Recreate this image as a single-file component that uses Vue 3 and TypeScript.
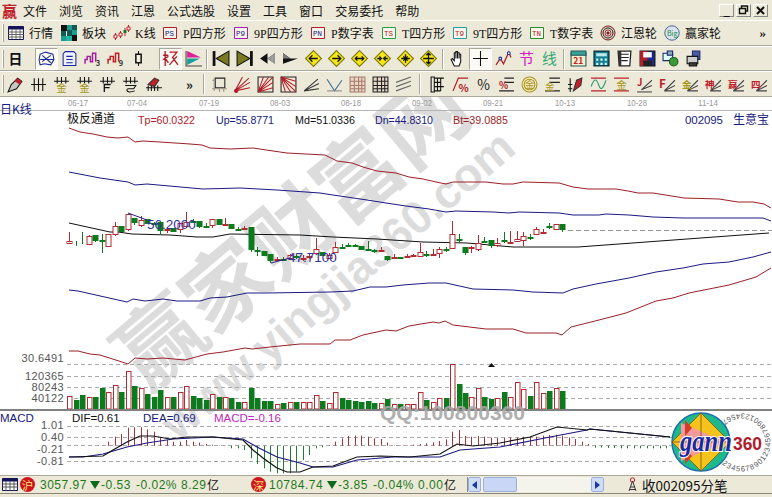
<template>
  <div class="app">
    <div class="menu">
      <span class="menu-logo">赢</span>
      <span v-for="m in menus" :key="m" class="menu-item">{{ m }}</span>
      <div class="win-btns">
        <span class="win-btn">_</span>
        <span class="win-btn">
          <svg width="11" height="10" viewBox="0 0 11 10">
            <path d="M3.5 3V1h6v5H7.5M1.5 3.5h6v5h-6z" fill="none" stroke="#111" stroke-width="1.4" />
          </svg>
        </span>
        <span class="win-btn">
          <svg width="9" height="9" viewBox="0 0 9 9">
            <path d="M1 1l7 7M8 1 1 8" fill="none" stroke="#111" stroke-width="2" />
          </svg>
        </span>
      </div>
    </div>

    <div class="bar bar-one">
      <i class="grip"></i>
      <div v-for="item in mainTools" :key="item.label" class="main-tool" :style="{ width: item.span + 'px' }">
        <svg class="ico" :width="item.w" height="16" :viewBox="`0 0 ${item.w} 16`">
          <component :is="el.tag" v-for="(el, n) in item.els" :key="n" v-bind="el.attrs">{{ el.text }}</component>
        </svg>
        <span>{{ item.label }}</span>
      </div>
      <span class="more">»</span>
    </div>

    <div class="bar bar-two">
      <i class="grip"></i>
      <template v-for="(tool, idx) in rowTwo" :key="idx">
        <i v-if="tool.sep" class="sep" :style="{ width: tool.sep + 'px' }"></i>
        <span v-else-if="tool.arrow" class="drop" :style="{ width: tool.arrow + 'px' }"></span>
        <div v-else class="tool" :class="{ pressed: tool.pressed }">
          <svg class="ico" width="17" height="17" viewBox="0 0 16 16">
            <component :is="el.tag" v-for="(el, n) in tool.els" :key="n" v-bind="el.attrs">{{ el.text }}</component>
          </svg>
        </div>
      </template>
    </div>

    <div class="bar bar-three">
      <i class="grip"></i>
      <template v-for="(tool, idx) in rowThree" :key="idx">
        <i v-if="tool.sep" class="sep" :style="{ width: tool.sep + 'px' }"></i>
        <span v-else-if="tool.more" class="more more-inline">»</span>
        <div v-else class="tool">
          <svg class="ico" width="17" height="17" viewBox="0 0 16 16">
            <component :is="el.tag" v-for="(el, n) in tool.els" :key="n" v-bind="el.attrs">{{ el.text }}</component>
          </svg>
        </div>
      </template>
    </div>

    <div class="chart">
      <svg class="chart-svg" width="772" height="378" viewBox="0 97 772 378">
        <!-- watermark under the chart -->
        <g class="mark">
          <text class="mark-big" transform="translate(147 393) rotate(-40)" textLength="430" lengthAdjust="spacing">赢家财富网</text>
          <text class="mark-url" transform="translate(178 442) rotate(-40.5)" textLength="447" lengthAdjust="spacing">www.yingjia360.com</text>
        </g>

        <!-- time axis -->
        <line x1="0" y1="110.5" x2="772" y2="110.5" stroke="#b5b5b5" />
        <text v-for="d in dates" :key="d.t" :x="d.x" y="106" class="axis" textLength="20" lengthAdjust="spacingAndGlyphs">{{ d.t }}</text>
        <text x="0" y="114" class="cn" fill="#16207e" font-size="12">日K线</text>

        <!-- legend -->
        <text x="67" y="123" class="cn" fill="#111" font-size="12">极反通道</text>
        <text v-for="l in legend" :key="l.t" :x="l.x" y="124" class="num" :fill="l.c" font-size="11" :textLength="l.w" lengthAdjust="spacingAndGlyphs">{{ l.t }}</text>
        <text x="685" y="124" class="num" fill="#16207e" font-size="11.5" textLength="38">002095</text>
        <text x="733" y="124" class="cn" fill="#16207e" font-size="12">生意宝</text>

        <!-- channel lines -->
        <polyline :points="tpLine" fill="none" stroke="#9c1f26" />
        <polyline :points="upLine" fill="none" stroke="#1a1a82" />
        <polyline :points="mdLine" fill="none" stroke="#111" />
        <polyline :points="dnLine" fill="none" stroke="#1a1a82" />
        <polyline :points="btLine" fill="none" stroke="#9c1f26" />

        <!-- price candles -->
        <g v-for="c in candles" :key="'c' + c.i" :stroke="c.color">
          <line :x1="c.x" :y1="c.high" :x2="c.x" :y2="c.low" />
          <rect
            :x="c.x - 2.5"
            :y="c.top"
            width="5"
            :height="c.h"
            :fill="c.up ? '#fff' : c.color"
            :stroke="c.color"
          />
        </g>
        <line x1="568" y1="230.5" x2="772" y2="230.5" stroke="#999" stroke-dasharray="5 3" />
        <polyline points="128,213 147,220" fill="none" stroke="#20208c" />
        <polyline points="271,263 290,258" fill="none" stroke="#20208c" />
        <text x="147" y="229" class="num" fill="#33339a" font-size="13.5">56.2000</text>
        <text x="288" y="262" class="num" fill="#33339a" font-size="13.5">47.7100</text>

        <!-- scale labels and dashes -->
        <line v-for="y in dashes" :key="y" x1="67" :y1="y" x2="772" :y2="y" stroke="#aaa" stroke-dasharray="4 3" />
        <text v-for="s in scales" :key="s.t" x="64" :y="s.y" class="scale">{{ s.t }}</text>

        <!-- volume -->
        <rect
          v-for="c in candles"
          :key="'v' + c.i"
          :x="c.x - 2"
          :y="c.vol"
          width="4.5"
          :height="409 - c.vol"
          :fill="c.up ? '#fff' : c.color"
          :stroke="c.color"
        />
        <path d="M488 367h7l-3.5-4z" fill="#111" />
        <rect x="0" y="409" width="772" height="2" fill="#808080" />

        <!-- macd -->
        <text x="0" y="422" class="num" fill="#16207e" font-size="11.5">MACD</text>
        <text x="72" y="422" class="num" fill="#111" font-size="11.5">DIF=0.61</text>
        <text x="143" y="422" class="num" fill="#16207e" font-size="11.5">DEA=0.69</text>
        <text x="214" y="422" class="num" fill="#c026c0" font-size="11.5">MACD=-0.16</text>
        <line
          v-for="b in macdBars"
          :key="'m' + b.i"
          :x1="b.x"
          y1="445.7"
          :x2="b.x"
          :y2="b.y"
          :stroke="b.y < 445.7 ? '#b0303a' : '#1f7f2c'"
        />
        <polyline :points="deaLine" fill="none" stroke="#1a1a82" stroke-width="1.2" />
        <polyline :points="difLine" fill="none" stroke="#111" stroke-width="1.2" />

        <text class="qq" x="380" y="420" textLength="145" lengthAdjust="spacingAndGlyphs">QQ:100800360</text>

        <!-- gann360 logo -->
        <g class="logo">
          <rect x="672" y="412" width="100" height="62" fill="#fff" />
          <path id="logoArc" d="M722 464A29 29 0 1 0 722 421" fill="none" />
          <text class="logo-ring"><textPath href="#logoArc">2345678901234567890123456789</textPath></text>
          <circle cx="701" cy="442" r="29" fill="#1db98a" stroke="#1d6db0" stroke-width="1.5" />
          <path d="M701 413 730 442 701 471 672 442z" fill="#f6c21c" stroke="#8a6a10" />
          <path d="M681 423 726 442 681 461z" fill="#f49a9a" />
          <path d="M685 420 692 428 685 436zM685 448 692 456 685 464z" fill="#d63a2a" />
          <path d="M701 413V471M672 442H730" stroke="#5a4a10" stroke-width=".7" fill="none" />
          <text class="logo-gann" x="680" y="451" textLength="52" lengthAdjust="spacingAndGlyphs">gann</text>
          <text class="logo-360" x="733" y="450" textLength="29" lengthAdjust="spacingAndGlyphs">360</text>
        </g>
      </svg>
    </div>

    <div class="status">
      <div class="quotes">
        <svg class="ico" width="16" height="13" viewBox="0 0 16 13">
          <path d="M.5.5h15v12H.5z" fill="#fff" stroke="#14145a" />
          <path d="M.5.5h15v3H.5z" fill="#14145a" />
          <path d="M.5 6h15M.5 9h15M4 3v10M8 3v10M12 3v10" stroke="#555" fill="none" />
        </svg>
        <div v-for="q in quotes" :key="q.name" class="quote" :class="q.cls">
          <span class="badge">{{ q.name }}</span>
          <span class="q-val">{{ q.value }}</span>
          <span class="q-tri"></span>
          <span class="q-chg">{{ q.change }}</span>
          <span class="q-pct">{{ q.pct }}</span>
          <span class="q-amt">{{ q.amount }}</span>
          <span class="q-yi">亿</span>
        </div>
      </div>
      <div class="scroll">
        <span class="scroll-btn">
          <svg width="6" height="8" viewBox="0 0 6 8"><path d="M5 0v8L0 4z" fill="#1a3a9a" /></svg>
        </span>
        <span class="scroll-thumb"></span>
        <span class="scroll-btn scroll-end">
          <svg width="6" height="8" viewBox="0 0 6 8"><path d="M0 0v8l5-4z" fill="#1a3a9a" /></svg>
        </span>
      </div>
      <div class="ticks">
        <svg width="11" height="15" viewBox="0 0 11 15">
          <path d="M5.5 4 2 14M5.5 4 9 14M3.5 10h4M3 12.5h5" stroke="#333" fill="none" />
          <circle cx="5.5" cy="3" r="2.2" fill="none" stroke="#c0202a" />
        </svg>
        <span>收002095分笔</span>
      </div>
    </div>
    <div class="footer"></div>
  </div>
</template>

<script setup lang="ts">
import { computed } from 'vue'

interface El {
  tag: string
  attrs: Record<string, string | number>
  text?: string
}

interface Tool {
  els?: El[]
  sep?: number
  arrow?: number
  pressed?: boolean
  more?: boolean
}

const p = (d: string, stroke = 'none', fill = 'none', sw = 1): El => ({
  tag: 'path',
  attrs: { d, stroke, fill, 'stroke-width': sw },
})
const t = (x: number, y: number, text: string, fill: string, size = 8, weight = 400): El => ({
  tag: 'text',
  attrs: { x, y, fill, 'font-size': size, 'font-weight': weight, 'font-family': '"Noto Sans CJK SC", sans-serif' },
  text,
})
const c = (cx: number, cy: number, r: number, stroke: string, fill = 'none'): El => ({
  tag: 'circle',
  attrs: { cx, cy, r, stroke, fill },
})

const box = (color: string, label: string, ink: string): El[] => [
  p('M1.5 2.5h13v11h-13z', color, '#f8f4ec'),
  { tag: 'text', attrs: { x: 3, y: 11, fill: ink, 'font-size': 7.5, 'font-family': '"Liberation Mono", monospace' }, text: label },
]

const menus = ['文件', '浏览', '资讯', '江恩', '公式选股', '设置', '工具', '窗口', '交易委托', '帮助']

const mainTools: { label: string; w: number; span: number; els: El[] }[] = [
  {
    label: '行情',
    w: 16,
    span: 53,
    els: [
      p('M.5 1.5h15v13H.5z', '#14145a', '#fff'),
      p('M.5 1.5h15v3H.5z', 'none', '#14145a'),
      p('M.5 7h15M.5 9.5h15M.5 12h15M4 4v10M8 4v10M12 4v10', '#666'),
    ],
  },
  {
    label: '板块',
    w: 16,
    span: 52,
    els: [
      p('M0 0h6v6H0z', 'none', '#111'),
      p('M6 0h5v5H6zM11 5h5v5h-5zM0 11h5v5H0z', 'none', '#1a9c8e'),
      p('M11 0h5v5h-5zM6 5h5v6H6zM0 6h5v5H0z', 'none', '#135a55'),
      p('M5 11h6v5H5z', 'none', '#26b5a5'),
      p('M11 10h5v6h-5z', 'none', '#111'),
    ],
  },
  {
    label: 'K线',
    w: 17,
    span: 49,
    els: [
      p('M2.5 8v7M7.5 6v7M12 3v8M15.5 0v7', '#c0202a'),
      p('M1 10h3v3H1zM6 8h3v3H6zM14 2h3v3h-3z', '#c0202a', '#fff'),
      p('M10.5 5h3v3h-3z', 'none', '#157a20'),
    ],
  },
  { label: 'P四方形', w: 16, span: 71, els: box('#b0202a', 'PS', '#16207e') },
  { label: '9P四方形', w: 16, span: 77, els: box('#a020b0', 'P9', '#16207e') },
  { label: 'P数字表', w: 16, span: 71, els: box('#b0202a', 'PN', '#16207e') },
  { label: 'T四方形', w: 16, span: 71, els: box('#20a040', 'TS', '#b0202a') },
  { label: '9T四方形', w: 16, span: 77, els: box('#20a0a0', 'T9', '#b0202a') },
  { label: 'T数字表', w: 16, span: 71, els: box('#20902a', 'TN', '#b0202a') },
  {
    label: '江恩轮',
    w: 16,
    span: 64,
    els: [c(8, 8, 7, '#7a1a1a', '#d8d0c0'), c(8, 8, 5, '#2a2a2a', '#e0dcc8'), c(8, 8, 3, '#b0202a', '#fff'), c(8, 8, 1.2, '#7a1a1a', '#7a1a1a')],
  },
  {
    label: '赢家轮',
    w: 16,
    span: 64,
    els: [c(8, 8, 7.2, '#4a6a9a', '#dbe4ee'), t(3, 11, 'Big', '#1a8a3a', 7)],
  },
]

const diamond = (arrow: string): El[] => [
  p('M8 .5 15.5 8 8 15.5.5 8z', '#7a7a10', '#f5e51a'),
  p(arrow, '#111', 'none', 1.2),
]

const rowTwo: Tool[] = [
  { els: [t(1.5, 13, '日', '#111', 13, 700)] },
  { arrow: 8 },
  {
    pressed: true,
    els: [p('M2 4 7 2 14 4 15 9 12 14 6 13 2 14 1 9zM4 5l8 7M12 5 4 11M2 9h13', '#1a2a9a')],
  },
  { els: [p('M4 1.5h8l2 2v11H2v-11z', '#1a2a9a', '#eef2ff'), p('M5 6h6M5 9h6M5 12h6', '#1a2a9a')] },
  { els: [p('M1 13V9h2V6h3v5h2V3h3v8', '#a020a0', 'none', 1.4), t(11, 15, '3', '#333', 7, 700)] },
  { els: [p('M1 13V9h2V6h3v5h2V3h3v8', '#c0202a', 'none', 1.4), t(11, 15, '9', '#333', 7, 700)] },
  { els: [p('M8 1v14', '#111'), p('M5.5 4h5v8h-5z', '#111', '#f4efe0', 1.4)] },
  { arrow: 9 },
  {
    pressed: true,
    els: [p('M3 1v14M1 5h5M1 9l5-3M7 2h7l-4 5 5 7M14 6l-7 8M3 8l3 4', '#b0202a', 'none', 1.3)],
  },
  {
    els: [
      p('M1 1v14h15', '#444'),
      p('M2 1 15 7 2 7z', 'none', '#e0209a'),
      p('M2 8 14 8 2 14z', 'none', '#1aa09a'),
    ],
  },
  { sep: 5 },
  { els: [p('M1 1v14', '#111', 'none', 2.6), p('M15 1v14L3 8z', '#111', '#7a7a20')] },
  { els: [p('M14.5 1v14', '#111', 'none', 2.6), p('M1 1v14l12-7z', '#111', '#7a7a20')] },
  { els: [p('M15 3v10L8 8zM1 8l7-5v10z', 'none', '#111'), p('M15 3v10L8 8z', 'none', '#9c9c9c')] },
  { els: [p('M1 3v10l7-5z', 'none', '#9c9c9c'), p('M8 8h7L1 13V3z', 'none', '#111'), p('M1 3v5h7z', 'none', '#7f7f7f')] },
  { els: diamond('M12 8H4M7 5 4 8l3 3') },
  { els: diamond('M4 8h8M9 5l3 3-3 3') },
  { els: diamond('M4 8h8M6 6 4 8l2 2M10 6l2 2-2 2') },
  { els: diamond('M3 8h3M10 8h3M5 6l2 2-2 2M11 6 9 8l2 2') },
  { els: diamond('M8 4v8M4 8h8M6 6l4 4M10 6l-4 4') },
  { els: diamond('M8 3v10M3 8h10M6 5l2-2 2 2M6 11l2 2 2-2') },
  { sep: 6 },
  { els: [p('M5 15 2 9l1-1 2 2V2.5h1.5V8V1.5H8V8V2.5h1.5V8V4H11v7l-1.5 4z', '#111', '#fff')] },
  { pressed: true, els: [p('M8 1v14M1 8h14', '#111')] },
  { els: [p('M1 14 5 8l3 5 5-11 2 5', '#b0202a', 'none', 1.2), c(5, 8, 1.3, '#1a2a9a', '#fff'), c(13, 3, 1.3, '#1a2a9a', '#fff')] },
  { els: [t(1, 13, '节', '#d020c0', 14, 400)] },
  { els: [t(1, 13, '线', '#36a878', 14, 400)] },
  { sep: 6 },
  {
    els: [
      p('M1 3h14v12H1z', '#1a5a5a', '#f6efcc'),
      p('M1 1h14v4H1z', '#1a5a5a', '#3ca09a'),
      t(3, 13, '21', '#c0202a', 8, 700),
    ],
  },
  {
    els: [
      p('M1 1h14v14H1z', '#0a2a3a', '#0e7f8e', 1.2),
      p('M3 3h10v3H3z', 'none', '#bfe8ee'),
      p('M3 8h2v2H3zM7 8h2v2H7zM11 8h2v2h-2zM3 12h2v2H3zM7 12h2v2H7zM11 12h2v2h-2z', 'none', '#dff'),
    ],
  },
  { els: [p('M2 1h12l-1 14H3z', '#222', '#fff', 1.2), p('M4 4h8M4 7h8M5 10h6', '#222'), p('M2 1h3v14H3z', 'none', '#333')] },
  { els: [p('M1 1h14v14H1z', '#111', '#1a2a8a'), p('M1 1h7v14H1z', 'none', '#b0202a'), p('M4 2h8v5H4z', 'none', '#fff'), p('M4 10h8v5H4z', 'none', '#222')] },
  { els: [p('M1 3h9v7H1z', '#1a2a6a', '#dff'), p('M5 1h5v4H5z', '#1a2a6a', '#8ab'), c(11, 11, 4, '#1a5a1a', '#3a9a3a')] },
  { els: [p('M7 1h7v8H7z', '#1a2a6a', '#4a5aa0'), p('M2 6h10v7H2z', '#111', '#ccc'), p('M4 12h7v3H4z', '#111', '#3a3a3a')] },
]

const rowThree: Tool[] = [
  { els: [p('M1 15 4 8l6-6 4 3-5 7z', '#111', '#c8c8c0'), p('M10 2l4 3-2 3-5-3z', 'none', '#c0202a')] },
  { els: [p('M1 8h14M4 2v12M8 2v12M12 2v12', '#111')] },
  { els: [p('M1 5h14M4 1v6M8 1v6M12 1v6', '#111'), t(3, 15, '金', '#a8961a', 10)] },
  { els: [p('M1 5h14M4 1v6M8 1v6M12 1v6', '#111'), t(3, 15, '金', '#a8961a', 10)] },
  { els: [p('M1 5h14M4 1v6M8 1v6M12 1v6', '#111'), p('M5 15V8h6M5 11h5', '#111', 'none', 1.2)] },
  { els: [p('M1 5h14M4 1v6M8 1v6M12 1v6', '#111'), p('M3 9h10l-2 3H6c-2 0-2 3 1 3s5-1 5-1', '#111')] },
  { els: [p('M1 11h15M3 9v5M6 9v5M9 9v5M12 9v5', '#111'), p('M3 8 9 2l4 2-4 6z', '#333', '#c0202a')] },
  { more: true },
  { sep: 8 },
  { els: [p('M4 2h9v9H4z', '#222'), p('M1 4h3M1 12h14M3 2v12M8 11v4M12 11v4', '#998')] },
  { els: [p('M1 14 14 2M1 14 15 6M1 14 15 11M1 14 8 1', '#b0202a'), c(2, 14, 1.5, '#b0202a', '#b0202a')] },
  { els: [p('M1 1h14v14H1z', '#222', '#f6e8d8'), p('M1 15 15 1M1 15 15 6M1 15 15 11M1 15 6 1M1 15 11 1', '#b0202a')] },
  { els: [p('M1 1h14v14H1z', '#222', '#f6e8d8'), p('M1 1 15 15M1 1 15 5M1 1 15 10M1 1 5 15M1 1 10 15', '#b0202a')] },
  { els: [p('M1 14 14 3M1 14 15 7M1 14 15 12', '#333')] },
  { els: [p('M1 3 8 14l7-10', '#3a6a9a'), p('M1 14h14', '#888')] },
  { els: [p('M1 1h14v14H1zM1 5h14M1 9h14M1 12h14M5 1v14M9 1v14M12 1v14', '#a87a6a', '#e8d8c8')] },
  { els: [p('M1 1h14v14H1zM1 5h14M1 9h14M1 12h14M5 1v14M9 1v14M12 1v14', '#222', '#e8d8c8')] },
  { els: [p('M1 6 15 1M1 10 15 5M1 14 15 9', '#666')] },
  { sep: 11 },
  { els: [p('M2 1h3v14H2z', '#111'), p('M5 2h9M5 6h6M5 10h9M5 14h6M8 2v12M11 2v12', '#111')] },
  { els: [p('M1 14 6 2h9', '#b0202a', 'none', 1.2), t(6, 15, '%', '#b0202a', 10, 700)] },
  { els: [t(2, 13, '%', '#222', 13)] },
  { els: [p('M6 2h9M6 6h9M1 14h14', '#222'), t(1, 12, '%', '#b0202a', 9, 700)] },
  { els: [c(8, 8, 7, '#a8961a', '#f6eccc'), c(8, 8, 5, '#a8961a'), t(3.5, 11, '金', '#a8961a', 9)] },
  { els: [p('M5 2h10M5 6h10M1 14h14', '#222'), t(1, 13, '金', '#a8961a', 9)] },
  { els: [p('M1 8h4M1 12h4M3 2v13', '#111'), p('M6 14 9 4l5-2-1 7z', '#333', '#c0202a')] },
  { els: [p('M1 2h14M1 14h14', '#c0202a'), p('M1 10c3-8 5-8 7-2s4 5 7-4', '#2a9a6a')] },
  { els: [p('M1 2h14M1 14h14', '#c0202a'), t(3, 12, '金', '#a8961a', 10)] },
  { els: [p('M1 15h14', '#444'), p('M5 13 15 4M5 13 15 9', '#444'), t(1, 9, 'J', '#c0202a', 9, 700)] },
  { els: [p('M5 14 15 4M5 14 15 9M5 14h10', '#444'), t(0, 11, 'F', '#c0202a', 11, 700)] },
  { els: [p('M5 14 15 4M5 14 15 9M5 14h10', '#444'), t(0, 11, '金', '#a8961a', 9, 700)] },
  { els: [p('M5 14 15 4M5 14 15 9M5 14h10', '#444'), t(0, 11, '神', '#c0202a', 9, 700)] },
  { els: [p('M5 14 15 4M5 14 15 9M5 14h10', '#444'), t(0, 11, '赢', '#c0202a', 9, 700)] },
  { els: [p('M5 14 15 4M5 14 15 9M5 14h10', '#444'), t(0, 11, '四', '#c0202a', 9, 700)] },
]

const dates = [
  { t: '06-17', x: 68 },
  { t: '07-04', x: 127 },
  { t: '07-19', x: 199 },
  { t: '08-03', x: 270 },
  { t: '08-18', x: 341 },
  { t: '09-02', x: 412 },
  { t: '09-21', x: 483 },
  { t: '10-13', x: 555 },
  { t: '10-28', x: 627 },
  { t: '11-14', x: 698 },
]

const legend = [
  { t: 'Tp=60.0322', x: 138, c: '#b0202a', w: 57 },
  { t: 'Up=55.8771', x: 216, c: '#16207e', w: 58 },
  { t: 'Md=51.0336', x: 295, c: '#111', w: 60 },
  { t: 'Dn=44.8310', x: 375, c: '#16207e', w: 58 },
  { t: 'Bt=39.0885', x: 453, c: '#9c1f26', w: 55 },
]

const scales = [
  { t: '30.6491', y: 362 },
  { t: '120365', y: 380 },
  { t: '80243', y: 391 },
  { t: '40122', y: 402 },
  { t: '1.01', y: 429 },
  { t: '0.40', y: 441 },
  { t: '-0.21', y: 453 },
  { t: '-0.81', y: 465 },
]
const dashes = [364.5, 376.5, 387.5, 398.5, 426.5, 437.5, 445.5, 461.5]

const tpLine =
  '69,128 80,132 93,134 107,137 118,138 128,137 135,142 143,141 160,142 190,144 202,145 210,148 230,149 253,148 273,151 287,153 325,155 337,161 352,163 363,167 377,171 386,172 396,173 409,177 423,179 436,182 446,184 453,182 486,182 503,184 513,184 523,182 559,183 573,187 588,189 616,189 628,191 638,193 653,193 684,198 719,199 738,202 753,202 764,204 771,208'
const upLine =
  '69,172 100,178 128,182 135,185 147,184 203,189 240,188 277,190 320,193 333,195 367,200 386,203 406,206 429,209 446,212 456,211 493,212 509,213 519,212 559,213 573,215 599,215 606,214 629,215 653,217 683,218 739,218 763,218 771,221'
const mdLine =
  '69,223 110,232 118,232 132,234 170,235 197,237 213,237 230,234 300,235 333,237 377,239 423,242 467,243 490,245 513,247 578,247 769,233'
const dnLine =
  '69,290 78,291 127,302 133,299 145,301 163,299 177,301 200,301 210,298 227,297 247,293 267,293 330,292 353,291 370,287 386,287 403,285 429,283 446,283 473,289 513,290 533,292 563,293 573,289 596,284 629,278 656,272 683,268 703,264 729,262 753,257 771,252'
const btLine =
  '69,351 78,351 90,354 100,355 122,362 128,364 135,358 147,359 163,358 185,360 207,354 223,352 245,348 252,349 270,347 300,344 330,344 335,340 350,340 363,335 386,330 396,331 409,326 433,322 439,323 445,321 453,325 486,329 513,329 526,333 556,333 562,335 571,327 599,320 626,313 656,301 673,298 689,293 729,285 756,277 771,268'
const difLine =
  '69,457 103,456 113,450 127,442 140,436 153,436 170,439 187,437 213,437 243,440 253,450 263,458 277,468 287,472 300,472 313,467 333,466 357,457 380,456 410,457 440,454 457,444 473,446 500,443 530,437 557,427 587,430 590,429 630,433 670,437'
const deaLine =
  '69,457 83,457 103,454 127,447 147,443 173,439 213,437 243,439 257,447 277,457 300,463 313,467 333,467 357,460 393,457 440,457 460,450 500,447 550,437 587,430 590,429 630,433 670,437'

// up, bodyTop, bodyBottom, high, low, volume top
const raw: [number, number, number, number, number, number][] = [
  [1, 241, 243, 232, 243, 395.7], [0, 243, 243, 241, 246, 400], [0, 241.5, 242, 232, 244, 395], [1, 236, 244, 235, 245, 396.7],
  [0, 235, 240, 235, 242, 397.3], [0, 240, 240.5, 234, 253, 388.3], [1, 234, 246, 234, 247, 392.3], [1, 226, 234, 222, 236, 385],
  [0, 226, 231, 226, 232, 392], [1, 214, 229, 214, 231, 371.3], [0, 218, 222, 218, 225, 386], [1, 220, 225, 216, 227, 388.3],
  [0, 219, 223, 219, 224, 394.3], [0, 222.5, 224, 222, 225, 397], [0, 222, 230, 222, 234, 390], [1, 229, 229.5, 227, 233, 396.7],
  [0, 228, 231, 228, 232, 397.3], [1, 223, 229, 223, 233, 392.3], [1, 222, 226, 212, 228, 385.7], [0, 221, 221.5, 219, 223, 396],
  [0, 221, 226, 221, 228, 397.7], [0, 226, 226.5, 223, 228, 400], [1, 219, 225, 219, 228, 394.3], [0, 219, 224, 219, 224, 396.7],
  [1, 224, 225, 218, 225, 396.7], [0, 224, 228, 224, 228, 398.3], [0, 229, 229.5, 227, 231, 402], [1, 227.5, 228.5, 226, 229, 402.3],
  [0, 227, 249, 227, 252, 388], [0, 250, 250.5, 247, 256, 398.3], [0, 251, 255, 251, 256, 401], [0, 254, 260, 254, 263, 401],
  [1, 259, 260, 257, 260, 404], [0, 259, 259.5, 257, 261, 403.3], [1, 255, 258, 254, 259, 402.3], [0, 256, 257, 254, 259, 402.3],
  [1, 258, 258.5, 255, 261, 402.3], [1, 256, 256.5, 254, 259, 402.3], [1, 249, 253, 238, 255, 395], [0, 252, 255, 252, 256, 401],
  [1, 255, 258, 253, 259, 403.3], [1, 247, 252, 242, 253, 392.3], [0, 247, 247.5, 244, 249, 398.3], [0, 245, 245.5, 243, 247, 400],
  [0, 245, 245.5, 244, 247, 401], [0, 246, 249, 246, 249, 401.7], [0, 249, 249.5, 241, 250, 401], [0, 250, 250.5, 249, 253, 402.7],
  [1, 250, 250.5, 247, 252, 403.3], [0, 256, 259, 256, 261, 399], [1, 257, 257.5, 254, 258, 404.3], [0, 257, 257.5, 257, 258, 404.3],
  [1, 256, 256.5, 254, 257, 404.3], [1, 255, 256, 254, 256, 404.3], [1, 252, 256, 243, 257, 392.3], [0, 254, 254.5, 251, 257, 400],
  [1, 254, 255, 249, 255, 402.3], [1, 249, 253, 247, 258, 398.3], [0, 249, 249.5, 247, 252, 398.3], [1, 234, 248, 221, 248, 364.3],
  [0, 239, 239.5, 234, 243, 384], [0, 247, 252, 247, 255, 393.3], [1, 247, 247.5, 246, 253, 397.3], [1, 243, 249, 235, 251, 388.3],
  [0, 241, 241.5, 237, 243, 397.3], [0, 240, 245, 240, 248, 399], [1, 243, 245, 238, 247, 398.3], [0, 240, 240.5, 232, 243, 392.3],
  [1, 241.5, 242.5, 231, 243, 396.7], [1, 239, 241, 231, 242, 381.7], [1, 236, 240, 232, 246, 389.3], [0, 237, 237.5, 234, 240, 396],
  [1, 229, 234, 227, 235, 382.3], [1, 231.5, 232.5, 229, 233, 393.3], [0, 226, 226.5, 223, 229, 391], [1, 224, 229, 224, 229, 388.3],
  [0, 224, 229, 224, 232, 391],
]

const xOf = (i: number) => Math.round(69.3 + 6.487 * i) + 0.5

const candles = computed(() =>
  raw.map((r, i) => ({
    i,
    x: xOf(i),
    up: r[0] === 1,
    color: r[0] === 1 ? '#b32a33' : '#0d7a1e',
    top: Math.round(r[1]) + 0.5,
    h: Math.max(Math.round(r[2]) - Math.round(r[1]), 0),
    high: r[3],
    low: r[4],
    vol: Math.round(r[5]) + 0.5,
  })),
)

// macd bar tips, read in 3x crop coordinates, from candle 5 on
const macdTips = [
  316, 305, 290, 282, 263, 262, 262, 268, 275, 292, 300, 305, 305, 300, 305, 308, 312, 314, 318, 318, 325, 325, 330, 355, 372, 385, 395,
  400, 400, 400, 395, 360, 345, 325, 322, 315, 305, 295, 288, 287, 287, 290, 295, 297, 308, 316, 316, 316, 314, 312, 310, 307, 303, 298,
  275, 270, 288, 290, 288, 290, 293, 294, 293, 293, 293, 290, 290, 290, 287, 285, 284, 287, 293, 297, 305, 312, 323, 323, 324, 324, 325,
  325, 325, 325, 325, 325, 325, 325, 324,
]
const macdBars = computed(() =>
  macdTips.map((v, n) => ({ i: n, x: xOf(n + 5), y: 340 + v / 3 })),
)

const quotes = [
  { name: '沪', cls: 'sh', value: '3057.97', change: '-0.53', pct: '-0.02%', amount: '8.29' },
  { name: '深', cls: 'sz', value: '10784.74', change: '-3.85', pct: '-0.04%', amount: '0.00' },
]
</script>

<style scoped>
.app {
  display: flex;
  flex-direction: column;
  width: 772px;
  height: 497px;
  overflow: hidden;
  background: #ece9d8;
  font-family: "Noto Sans CJK SC", "Liberation Sans", sans-serif;
  font-size: 12px;
  color: #111;
}

.menu {
  display: flex;
  align-items: center;
  height: 20px;
  padding-left: 2px;
  flex: none;
}

.menu-logo {
  width: 21px;
  color: #c0202a;
  font-size: 15px;
  font-weight: 700;
}

.menu-item {
  margin-right: 12px;
}

.win-btns {
  display: flex;
  gap: 2px;
  margin-left: auto;
  margin-right: 4px;
}

.win-btn {
  display: flex;
  align-items: center;
  justify-content: center;
  width: 15px;
  height: 13px;
  border: 1px solid;
  border-color: #fff #888 #888 #fff;
  color: #111;
  font-size: 11px;
  font-weight: 700;
  line-height: 1;
  box-sizing: border-box;
}

.bar {
  display: flex;
  align-items: center;
  flex: none;
  box-sizing: border-box;
  border-top: 1px solid #fff;
  border-bottom: 1px solid #aca899;
  padding-left: 2px;
}

.bar-one {
  height: 26px;
  font-family: "Liberation Serif", "Noto Sans CJK SC", serif;
}

.bar-two {
  height: 25px;
}

.bar-three {
  height: 26px;
}

.grip {
  width: 2px;
  height: 18px;
  margin-right: 0;
  border-left: 1px solid #fff;
  border-right: 1px solid #a8a490;
  box-sizing: border-box;
  flex: none;
}

.main-tool {
  display: flex;
  align-items: center;
  gap: 5px;
  font-size: 12px;
  white-space: nowrap;
  flex: none;
}

.bar-one .grip {
  margin-right: 4px;
}

.more {
  margin-left: auto;
  margin-right: 6px;
  font-size: 13px;
  font-weight: 700;
}

.more-inline {
  width: 35px;
  margin: 0;
  padding-left: 21px;
  box-sizing: border-box;
  flex: none;
}

.ico {
  flex: none;
  display: block;
  overflow: visible;
}

.tool {
  display: flex;
  align-items: center;
  justify-content: center;
  width: 23px;
  height: 22px;
  box-sizing: border-box;
  flex: none;
}

.pressed {
  background: #fbfaf4;
  border: 1px solid;
  border-color: #aca899 #fff #fff #aca899;
}

.drop {
  display: block;
  height: 3px;
  flex: none;
  background: conic-gradient(from 150deg at 50% 100%, #111 60deg, transparent 0);
}

.sep {
  height: 20px;
  flex: none;
  background: linear-gradient(
    90deg,
    transparent calc(50% - 1px),
    #aca899 calc(50% - 1px),
    #aca899 50%,
    #fff 50%,
    #fff calc(50% + 1px),
    transparent calc(50% + 1px)
  );
}

.chart {
  flex: none;
  height: 378px;
  background: #fff;
}

.chart-svg {
  display: block;
  font-family: "Liberation Sans", sans-serif;
}

.mark-big {
  fill: #dcdcdc;
  font-family: "Noto Sans CJK SC", sans-serif;
  font-size: 86px;
  font-weight: 700;
}

.mark-url {
  fill: #dcdcdc;
  font-family: "Liberation Sans", sans-serif;
  font-size: 46px;
  font-weight: 700;
}

.axis {
  fill: #9a9a9a;
  font-size: 9.5px;
}

.cn {
  font-family: "Noto Sans CJK SC", sans-serif;
}

.scale {
  fill: #555;
  font-family: "Liberation Sans", sans-serif;
  font-size: 11px;
  letter-spacing: 0.4px;
  text-anchor: end;
}

.qq {
  fill: #a8a8a8;
  font-size: 21px;
  font-weight: 700;
  opacity: 0.9;
}

.logo-ring {
  fill: #555;
  font-size: 7.5px;
  letter-spacing: 1px;
}

.logo-gann {
  fill: #1a2a9a;
  stroke: #fff;
  stroke-width: 2px;
  paint-order: stroke;
  font-family: "Liberation Serif", serif;
  font-size: 30px;
  font-weight: 700;
  font-style: italic;
}

.logo-360 {
  fill: #b01c2c;
  font-size: 18px;
  font-weight: 700;
}

.status {
  display: flex;
  align-items: center;
  flex: none;
  height: 18px;
  box-sizing: border-box;
  border-top: 1px solid #aca899;
  padding-left: 2px;
}

.quotes {
  display: flex;
  align-items: center;
  width: 465px;
  flex: none;
  gap: 2px;
}

.quote {
  display: flex;
  align-items: center;
  color: #1c7a1c;
  font-family: "Liberation Sans", sans-serif;
  font-size: 12px;
  letter-spacing: 0.5px;
}

.sz {
  margin-left: 30px;
}

.badge {
  display: flex;
  align-items: center;
  justify-content: center;
  width: 15px;
  height: 15px;
  border-radius: 50%;
  background: #d0141e;
  color: #ffe27a;
  font-family: "Noto Sans CJK SC", sans-serif;
  font-size: 11px;
  letter-spacing: 0;
}

.q-val {
  margin-left: 5px;
  width: 50px;
}

.sz .q-val {
  margin-left: 3px;
  width: 58px;
}

.q-tri {
  width: 0;
  height: 0;
  border-left: 5px solid transparent;
  border-right: 5px solid transparent;
  border-top: 8px solid #0d6a1c;
}

.q-chg {
  margin-left: 1px;
  width: 35px;
}

.q-pct {
  width: 45px;
}

.q-amt {
  width: 26px;
}

.q-yi {
  color: #111;
  font-family: "Noto Sans CJK SC", sans-serif;
  letter-spacing: 0;
}

.scroll {
  display: flex;
  align-items: center;
  width: 136px;
  height: 15px;
  flex: none;
  background: #f4f3ec;
  border-left: 1px solid #888;
}

.scroll-btn {
  display: flex;
  align-items: center;
  justify-content: center;
  width: 11px;
  height: 13px;
  background: #cfdcf6;
  border: 1px solid #9ab0dc;
  border-radius: 2px;
  flex: none;
}

.scroll-thumb {
  width: 32px;
  height: 13px;
  margin-left: 2px;
  background: #c9d7f4;
  border: 1px solid #9ab0dc;
  border-radius: 2px;
}

.scroll-end {
  margin-left: auto;
}

.ticks {
  display: flex;
  align-items: center;
  gap: 4px;
  margin-left: 23px;
  font-size: 13.5px;
  white-space: nowrap;
}

.footer {
  flex: 1;
  border-top: 1px solid #8a8778;
}
</style>
